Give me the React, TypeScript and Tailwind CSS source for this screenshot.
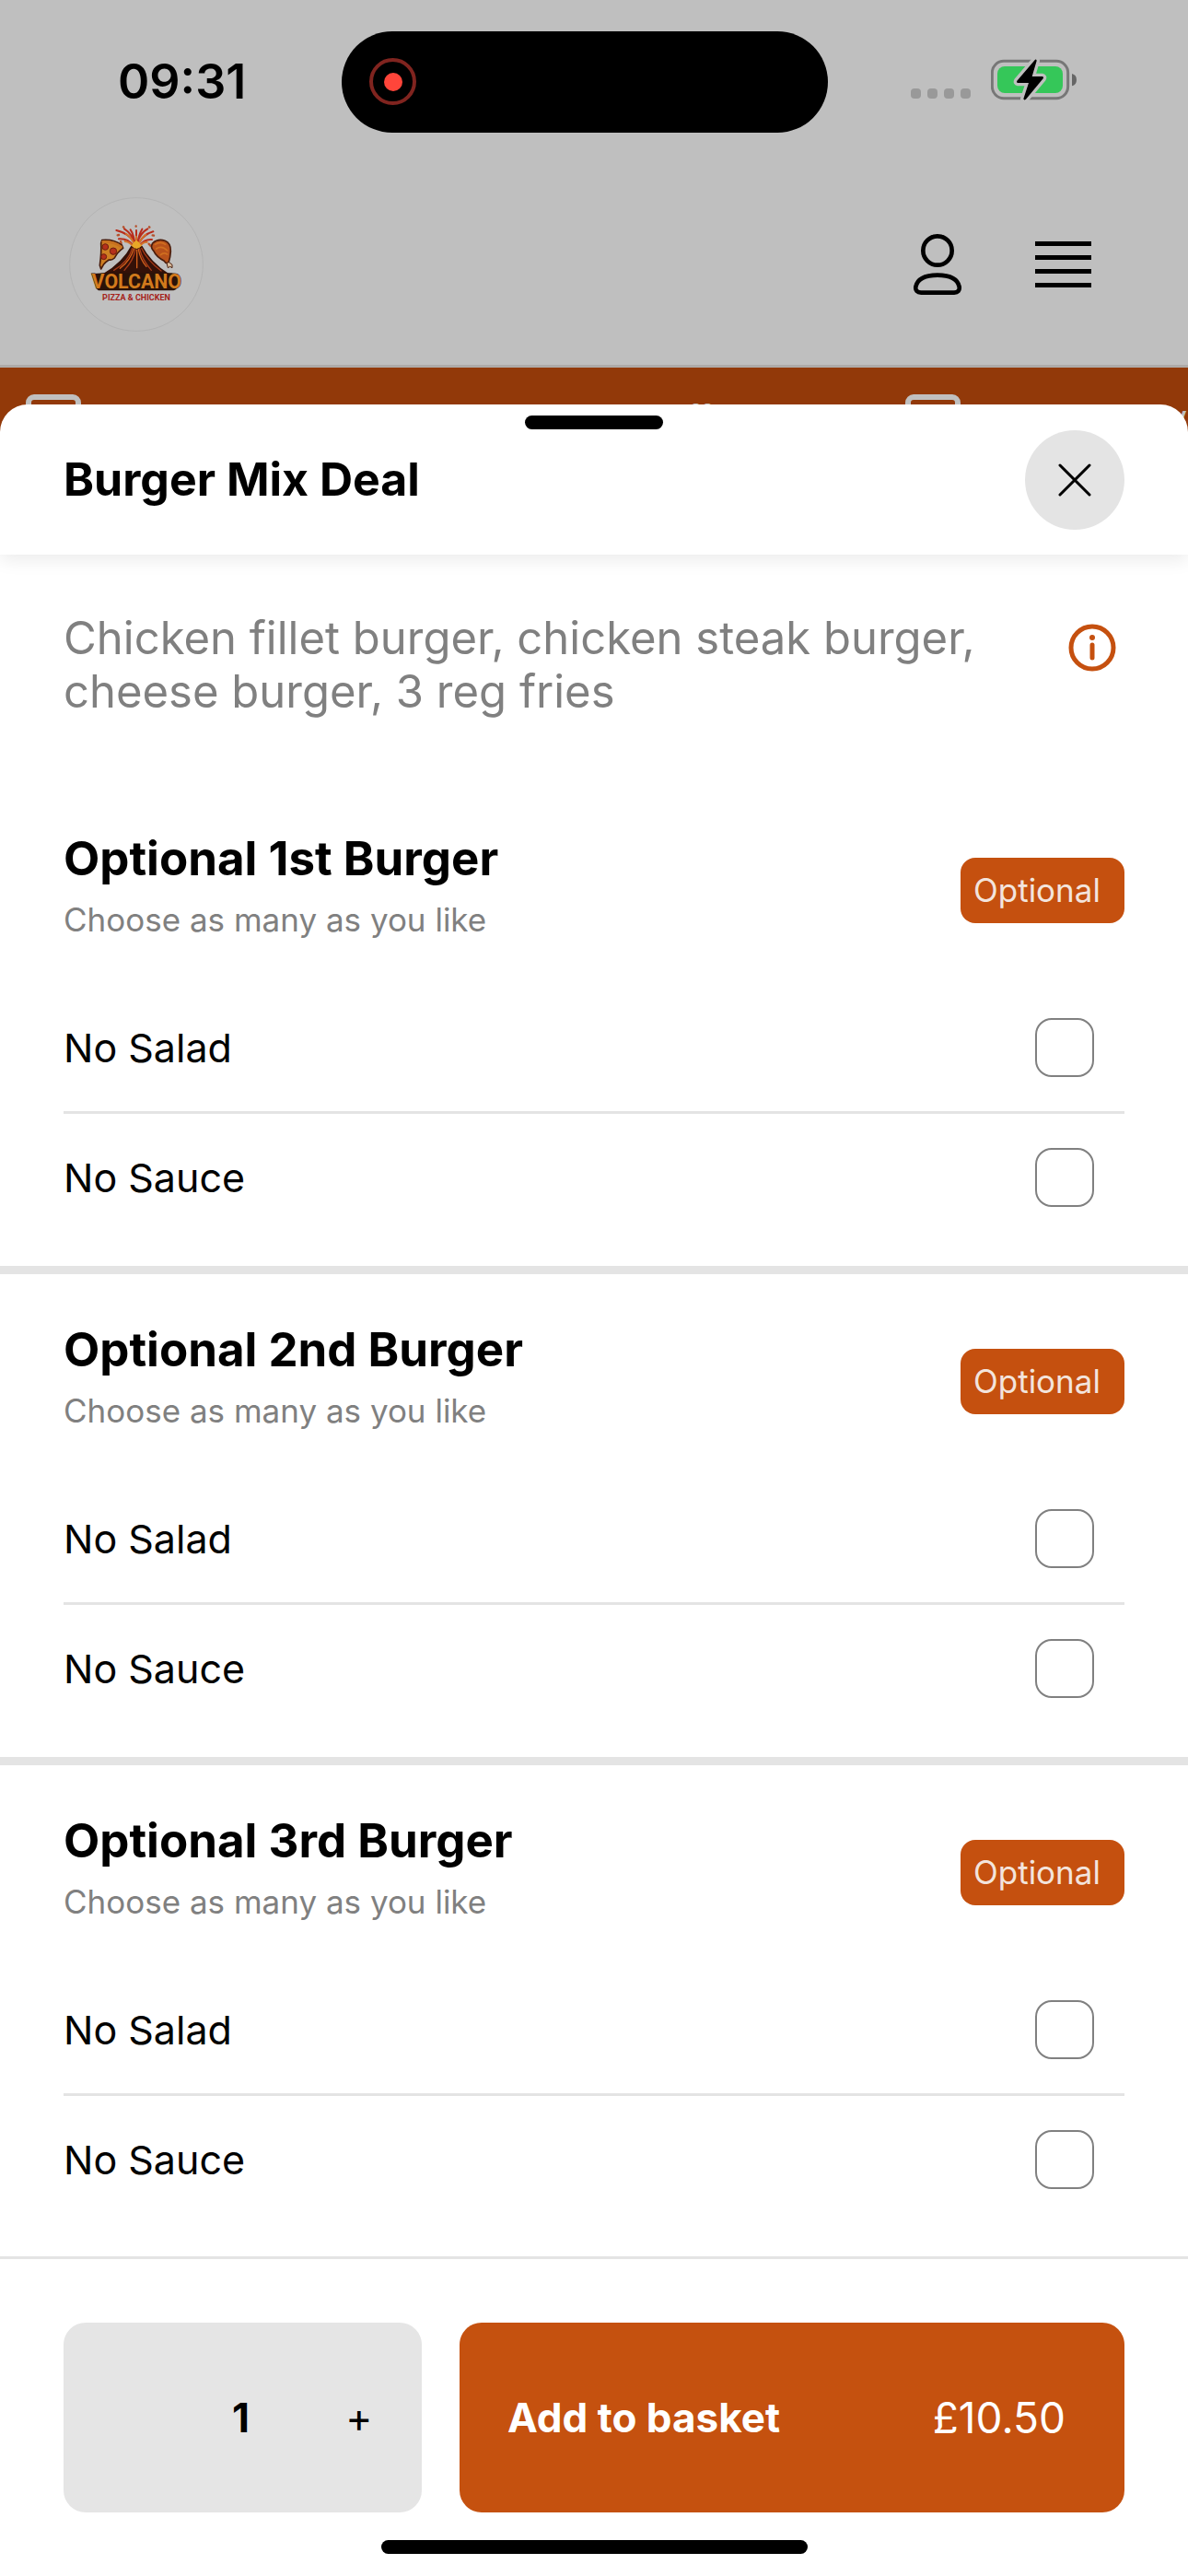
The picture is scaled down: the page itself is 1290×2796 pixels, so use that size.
import React, { useState } from "react";

const sections = [
  { id: "first", title: "Optional 1st Burger" },
  { id: "second", title: "Optional 2nd Burger" },
  { id: "third", title: "Optional 3rd Burger" },
];

const extras = ["No Salad", "No Sauce"];

function BatteryIcon() {
  return (
    <svg className="h-[47px] w-[94px]" viewBox="348 69 282 141" aria-hidden="true">
      <rect x="352" y="79" width="247" height="121" rx="38" fill="none" stroke="#777" strokeWidth="9" />
      <rect x="369" y="96" width="213" height="87" rx="24" fill="#35c759" />
      <path d="M612 120 Q627 124 627 140 Q627 156 612 160 Z" fill="#666" />
      <path
        d="M492 74 L433 143 Q430 149 436 150 L471 150 L454 202 Q456 208 462 203 L518 136 Q521 130 515 129 L482 129 L497 78 Q497 72 492 74 Z"
        fill="#000"
        stroke="#bfbfbf"
        strokeWidth="20"
        strokeLinejoin="round"
        paintOrder="stroke"
      />
    </svg>
  );
}

function VolcanoLogo() {
  return (
    <svg className="h-[146px] w-[146px]" viewBox="46 40 438 438" role="img" aria-label="Volcano Pizza and Chicken">
      <circle cx="265" cy="259" r="217" fill="#c0c0c0" stroke="#b4b4b4" strokeWidth="3" />
      {/* eruption */}
      <g fill="none" strokeLinecap="round">
        <path
          d="M262 196 Q248 160 200 148 M262 190 Q250 158 226 143 M260 188 Q256 160 246 146 M265 188 V148 M269 188 Q274 160 284 144 M268 190 Q278 156 302 143 M270 196 Q286 162 320 152 M254 198 Q240 174 208 176 M276 198 Q290 176 316 178"
          stroke="#b82d1c"
          strokeWidth="6"
        />
        <path
          d="M262 202 Q250 170 232 160 M265 202 V168 M269 202 Q280 172 296 162 M256 203 Q246 186 228 184 M274 203 Q284 186 300 186"
          stroke="#d2722a"
          strokeWidth="6"
        />
        <path
          d="M223 137 L224 138 M264 134 V135 M307 137 L308 138 M204 164 L208 163 M318 164 L322 165 M214 184 L216 190 M306 192 L312 199"
          stroke="#b5502a"
          strokeWidth="7"
        />
      </g>
      {/* mountain */}
      <path d="M248 198 Q264 210 284 198 Q312 252 372 290 H156 Q222 250 248 198 Z" fill="#341108" />
      <g fill="none" strokeLinecap="round" strokeWidth="4">
        <path d="M252 206 Q240 250 192 278 M262 210 Q256 246 226 278 M276 208 Q284 244 314 278 M282 206 Q300 246 346 280" stroke="#a63a18" />
        <path d="M257 208 Q246 246 212 272 M267 212 V270 M272 210 Q278 244 298 266" stroke="#d2601c" />
      </g>
      <path d="M250 198 Q257 184 265 180 Q276 186 282 198 Q266 218 250 198 Z" fill="#e8a727" />
      {/* pizza slice */}
      <path d="M153 180 Q190 176 218 196 L222 206 Q204 218 194 238 Q186 246 176 244 Q166 250 158 260 L150 274 L146 262 Q152 220 150 190 Z" fill="#cf7f22" stroke="#4a1d0c" strokeWidth="5" strokeLinejoin="round" />
      <path d="M156 185 Q192 184 216 202" fill="none" stroke="#c8701f" strokeWidth="8" strokeLinecap="round" />
      <g fill="#b5301b" stroke="#6d1e10" strokeWidth="3">
        <circle cx="164" cy="202" r="10" />
        <circle cx="190" cy="216" r="11" />
        <circle cx="159" cy="234" r="9" />
      </g>
      {/* drumstick */}
      <path d="M318 190 Q336 174 358 182 Q378 190 377 216 Q376 236 370 254 Q362 258 356 248 Q330 234 322 216 Q310 204 318 190 Z" fill="#b8521b" stroke="#4a1d0c" strokeWidth="5" />
      <path d="M326 194 Q344 182 360 194 M330 208 Q348 196 366 214 M344 228 Q354 218 366 226" fill="none" stroke="#d06f20" strokeWidth="5" strokeLinecap="round" />
      <path d="M364 254 L368 270 L375 266 L382 270 L382 260 L372 252 Z" fill="#dcbf9f" stroke="#4a1d0c" strokeWidth="3" />
      {/* name plate */}
      <path d="M125 289 L162 287 H380 Q402 288 402 316 Q400 342 386 344 H142 Q134 340 134 326 Z" fill="#2b1208" />
      <text
        x="266"
        y="338"
        textAnchor="middle"
        fill="#d27a1c"
        stroke="#2b1208"
        strokeWidth="3"
        paintOrder="stroke"
        className="font-[Roboto,sans-serif] text-[64px] font-bold"
      >
        VOLCANO
      </text>
      <text
        x="265"
        y="375"
        textAnchor="middle"
        fill="#a5231b"
        className="font-[Roboto,sans-serif] text-[27px] font-bold"
      >
        PIZZA &amp; CHICKEN
      </text>
    </svg>
  );
}

function UserIcon() {
  return (
    <svg className="h-[68px] w-[54px]" viewBox="94 636 162 204" fill="none" stroke="#000" strokeWidth="14" aria-hidden="true">
      <circle cx="175" cy="693" r="47" />
      <path d="M122 830 H229 Q248 829 246 811 Q238 773 175 773 Q112 773 104 811 Q102 829 122 830 Z" />
    </svg>
  );
}

function StatusBar() {
  return (
    <div className="flex h-[177px] items-center pr-[120px] pl-32">
      <span className="w-[243px] text-[52px] font-semibold">09:31</span>
      <div className="flex h-[110px] w-[528px] items-center rounded-full bg-black pl-[30px]">
        <div className="flex size-[51px] items-center justify-center rounded-full border-4 border-[#80241f]">
          <div className="size-5 rounded-full bg-[#ff453a]" />
        </div>
      </div>
      <div className="ml-auto flex items-end gap-[22px] pb-1">
        <div className="flex gap-[7px] pb-[3px]">
          <i className="size-[11px] rounded-[4px] bg-[#999]" />
          <i className="size-[11px] rounded-[4px] bg-[#999]" />
          <i className="size-[11px] rounded-[4px] bg-[#999]" />
          <i className="size-[11px] rounded-[4px] bg-[#999]" />
        </div>
        <BatteryIcon />
      </div>
    </div>
  );
}

function Notice() {
  return (
    <div className="flex w-[955px] flex-none items-start gap-8">
      <svg className="h-[60px] w-[60px] flex-none" viewBox="0 0 60 60" fill="none" stroke="#c0c0c0" strokeWidth="6" aria-hidden="true">
        <rect x="3" y="3" width="54" height="54" rx="6" />
      </svg>
      <span className="text-[38px] leading-[50px] whitespace-nowrap">Spend above 20.00 and get 20% off</span>
    </div>
  );
}

function OptionSection({ id, title }: { id: string; title: string }) {
  return (
    <section className="px-[69px] pb-[27px]">
      <div className="flex items-center justify-between pt-[52px] pb-[46px]">
        <div className="flex flex-col gap-3">
          <h2 className="text-[51px] leading-[60px] font-bold">{title}</h2>
          <p className="text-[35px] leading-[48px] text-[#808080]">Choose as many as you like</p>
        </div>
        <span className="mt-2 flex h-[71px] w-[178px] items-center rounded-2xl bg-[#c5500f] pl-[14px] text-[35px] text-[#f3e4dc]">
          Optional
        </span>
      </div>
      <ul className="divide-y-3 divide-[#e4e4e4]">
        {extras.map((extra) => (
          <li key={extra}>
            <label htmlFor={`${id}-${extra}`} className="flex h-[138px] items-center justify-between pr-[33px] text-[43px]">
              {extra}
              <input
                id={`${id}-${extra}`}
                type="checkbox"
                className="size-16 appearance-none rounded-[18px] border-2 border-[#808080] checked:bg-[#c5500f]"
              />
            </label>
          </li>
        ))}
      </ul>
    </section>
  );
}

export default function App() {
  const [quantity, setQuantity] = useState(1);

  return (
    <div className="flex min-h-screen flex-col bg-[#bfbfbf] font-[Inter,'Liberation_Sans',sans-serif] text-black">
      <StatusBar />

      <header className="flex h-[222px] items-center justify-between border-b-3 border-[#aeaaa8] pr-[105px] pl-[75px]">
        <VolcanoLogo />
        <div className="flex items-center gap-[79px]">
          <button type="button" aria-label="Account">
            <UserIcon />
          </button>
          <button type="button" aria-label="Menu" className="flex w-[61px] flex-col gap-[10px]">
            <span className="h-[5px] bg-black" />
            <span className="h-[5px] bg-black" />
            <span className="h-[5px] bg-black" />
            <span className="h-[5px] bg-black" />
          </button>
        </div>
      </header>

      <div className="flex h-[120px] overflow-hidden bg-[#923909] pt-[29px] pl-7 text-[#c0c0c0]">
        <Notice />
        <Notice />
      </div>

      <main className="relative -mt-20 flex flex-1 flex-col rounded-t-[30px] bg-white">
        <div className="relative flex h-[163px] items-center justify-between px-[69px] shadow-[0_6px_18px_rgba(0,0,0,0.08)] [clip-path:inset(0_0_-30px_0)]">
          <div className="absolute inset-x-0 top-3 mx-auto h-[15px] w-[150px] rounded-full bg-black" />
          <h1 className="text-[50px] font-bold">Burger Mix Deal</h1>
          <button type="button" aria-label="Close" className="flex size-[108px] items-center justify-center rounded-full bg-[#e4e4e4]">
            <svg className="size-9" viewBox="0 0 36 36" stroke="#000" strokeWidth="3" strokeLinecap="round" aria-hidden="true">
              <path d="M2 2 L34 34 M34 2 L2 34" />
            </svg>
          </button>
        </div>

        <div className="flex items-start justify-between px-[69px] pt-[62px] pb-[70px]">
          <p className="max-w-[1020px] text-[49px] leading-[58px] text-[#808080]">
            Chicken fillet burger, chicken steak burger, cheese burger, 3 reg fries
          </p>
          <button type="button" aria-label="More information" className="mt-[13px] mr-[9px]">
            <svg className="size-[52px]" viewBox="0 0 52 52" fill="none" stroke="#c5500f" strokeLinecap="round" aria-hidden="true">
              <circle cx="26" cy="26" r="23" strokeWidth="5" />
              <path d="M26 23 V37" strokeWidth="5" />
              <circle cx="26" cy="15" r="3" fill="#c5500f" stroke="none" />
            </svg>
          </button>
        </div>

        <div className="flex-1 divide-y-9 divide-[#e4e4e4]">
          {sections.map((section) => (
            <OptionSection key={section.id} id={section.id} title={section.title} />
          ))}
        </div>

        <footer className="border-t-3 border-[#e4e4e4] px-[69px] pt-[69px] pb-6">
          <div className="flex h-[206px] gap-[41px]">
            <div className="grid w-[389px] flex-none grid-cols-3 items-center rounded-3xl bg-[#e5e5e5] pr-1 text-center">
              <span className="col-start-2 text-[44px] font-bold">{quantity}</span>
              <button
                type="button"
                aria-label="Increase quantity"
                className="text-[44px]"
                onClick={() => setQuantity(quantity + 1)}
              >
                +
              </button>
            </div>
            <button
              type="button"
              className="flex flex-1 items-center justify-between rounded-3xl bg-[#c5510f] pr-16 pl-[52px] text-[44px] text-white"
            >
              <span className="font-bold">Add to basket</span>
              <span className="text-[46px]">£10.50</span>
            </button>
          </div>
          <div className="mx-auto mt-[30px] h-[15px] w-[463px] rounded-full bg-black" />
        </footer>
      </main>
    </div>
  );
}
